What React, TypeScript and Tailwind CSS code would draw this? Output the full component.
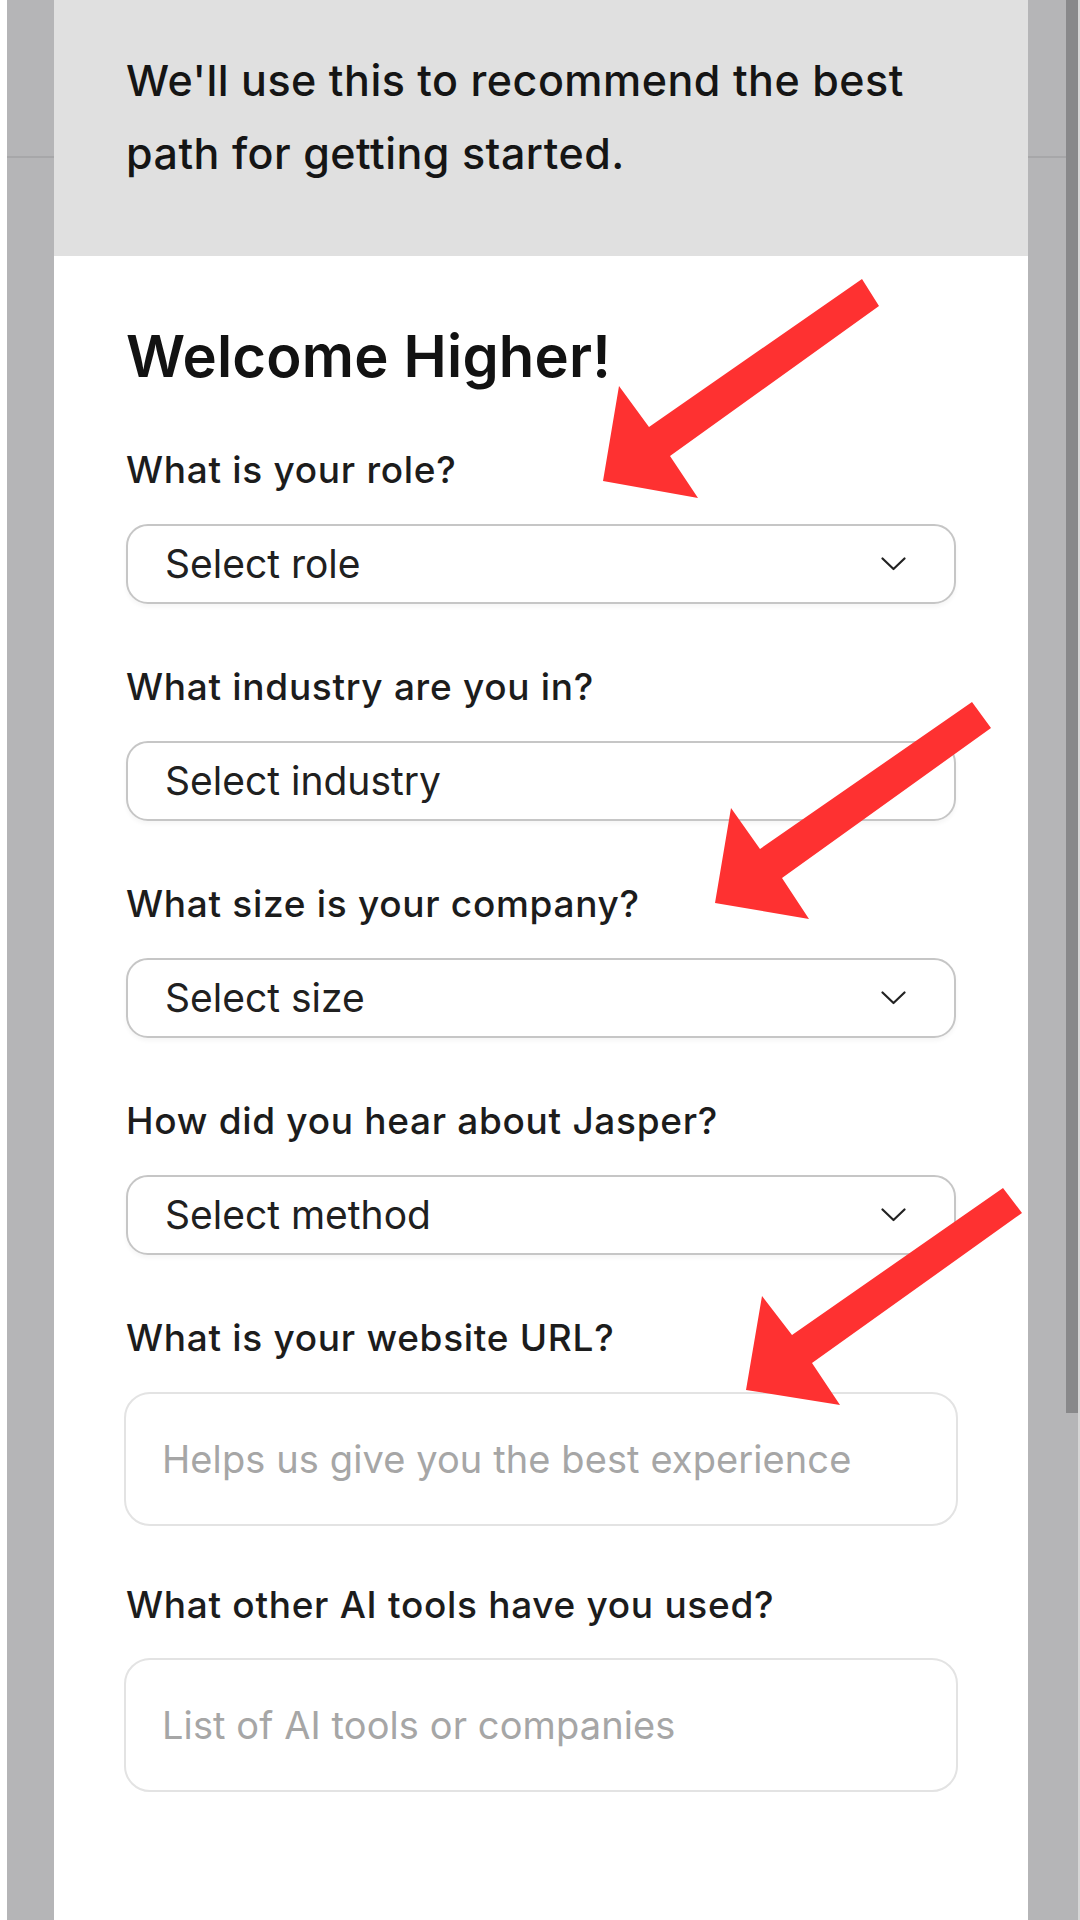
const selects = [
  { label: "What is your role?", value: "Select role", chevron: true },
  { label: "What industry are you in?", value: "Select industry", chevron: false },
  { label: "What size is your company?", value: "Select size", chevron: true },
  { label: "How did you hear about Jasper?", value: "Select method", chevron: true },
];

const inputs = [
  { label: "What is your website URL?", placeholder: "Helps us give you the best experience" },
  { label: "What other AI tools have you used?", placeholder: "List of AI tools or companies" },
];

const arrows = [
  "862,279 879,306 670,456 698,498 603,481 619,386 649,427",
  "972,702 991,728 782,878 809,919 715,903 731,808 760,849",
  "1003,1188 1022,1213 812,1363 840,1405 746,1390 762,1296 792,1335",
];

const Chevron = () => (
  <svg width="25" height="14" viewBox="0 0 25 14" fill="none" className="shrink-0">
    <polyline
      points="1.5,1.5 12.5,12 23.5,1.5"
      stroke="#222"
      strokeWidth="2.2"
      strokeLinecap="round"
      strokeLinejoin="round"
    />
  </svg>
);

const Label = ({ children }: { children: string }) => (
  <div className="h-[44px] flex items-center text-[37px] font-medium text-[#1c1c1c] tracking-[0.7px] whitespace-nowrap">
    {children}
  </div>
);

export default function App() {
  return (
    <div className="relative w-[1080px] h-[1920px] overflow-hidden bg-white flex font-['Inter',sans-serif]">
      {/* page behind the modal, left side */}
      <div className="w-[7px] bg-white" />
      <div className="w-[47px] bg-[#b5b5b7] flex flex-col">
        <div className="h-[158px] border-b-2 border-[#a7a7a9]" />
      </div>

      {/* modal */}
      <div className="w-[974px] flex flex-col bg-white">
        <div className="h-[256px] bg-[#e0e0e0] pl-[72px] pt-[44px] pr-[60px]">
          <p className="w-[800px] text-[43px] leading-[73px] font-medium text-[#151515] tracking-[0.5px]">
            We'll use this to recommend the best path for getting started.
          </p>
        </div>

        <div className="flex flex-col pl-[72px] pr-[72px] pt-[66px]">
          <h1 className="text-[58px] leading-[68px] font-semibold text-[#121212] tracking-[0.2px]">
            Welcome Higher!
          </h1>

          <div className="flex flex-col gap-[61px] mt-[58px]">
            {selects.map((s) => (
              <div key={s.label} className="flex flex-col gap-[32px]">
                <Label>{s.label}</Label>
                <div className="h-[80px] w-[830px] rounded-[22px] border-2 border-[#c6c6c6] shadow-[0_3px_4px_rgba(0,0,0,0.04)] flex items-center justify-between pl-[37px] pr-[48px]">
                  <span className="text-[39px] text-[#202020] tracking-[0px]">{s.value}</span>
                  {s.chevron && <Chevron />}
                </div>
              </div>
            ))}

            {inputs.map((i, idx) => (
              <div key={i.label} className={idx === 1 ? "flex flex-col gap-[31px] -mt-[4px]" : "flex flex-col gap-[32px]"}>
                <Label>{i.label}</Label>
                <div className="-ml-[2px] h-[134px] w-[834px] rounded-[26px] border-2 border-[#e3e3e3] flex items-center pl-[36px]">
                  <span className="text-[38px] text-[#a6a6a6] tracking-[0.1px] whitespace-nowrap">{i.placeholder}</span>
                </div>
              </div>
            ))}
          </div>
        </div>
      </div>

      {/* page behind the modal, right side with scrollbar */}
      <div className="w-[38px] bg-[#b5b5b7] flex flex-col">
        <div className="h-[158px] border-b-2 border-[#a7a7a9]" />
      </div>
      <div className="w-[12px] bg-[#b5b5b7] flex flex-col">
        <div className="h-[1413px] bg-[#88888a]" />
      </div>
      <div className="w-[2px] bg-[#d6d6d6]" />

      {/* annotation arrows */}
      <svg
        className="absolute inset-0 pointer-events-none"
        width="1080"
        height="1920"
        viewBox="0 0 1080 1920"
      >
        {arrows.map((p) => (
          <polygon key={p} points={p} fill="#fe3131" />
        ))}
      </svg>
    </div>
  );
}
